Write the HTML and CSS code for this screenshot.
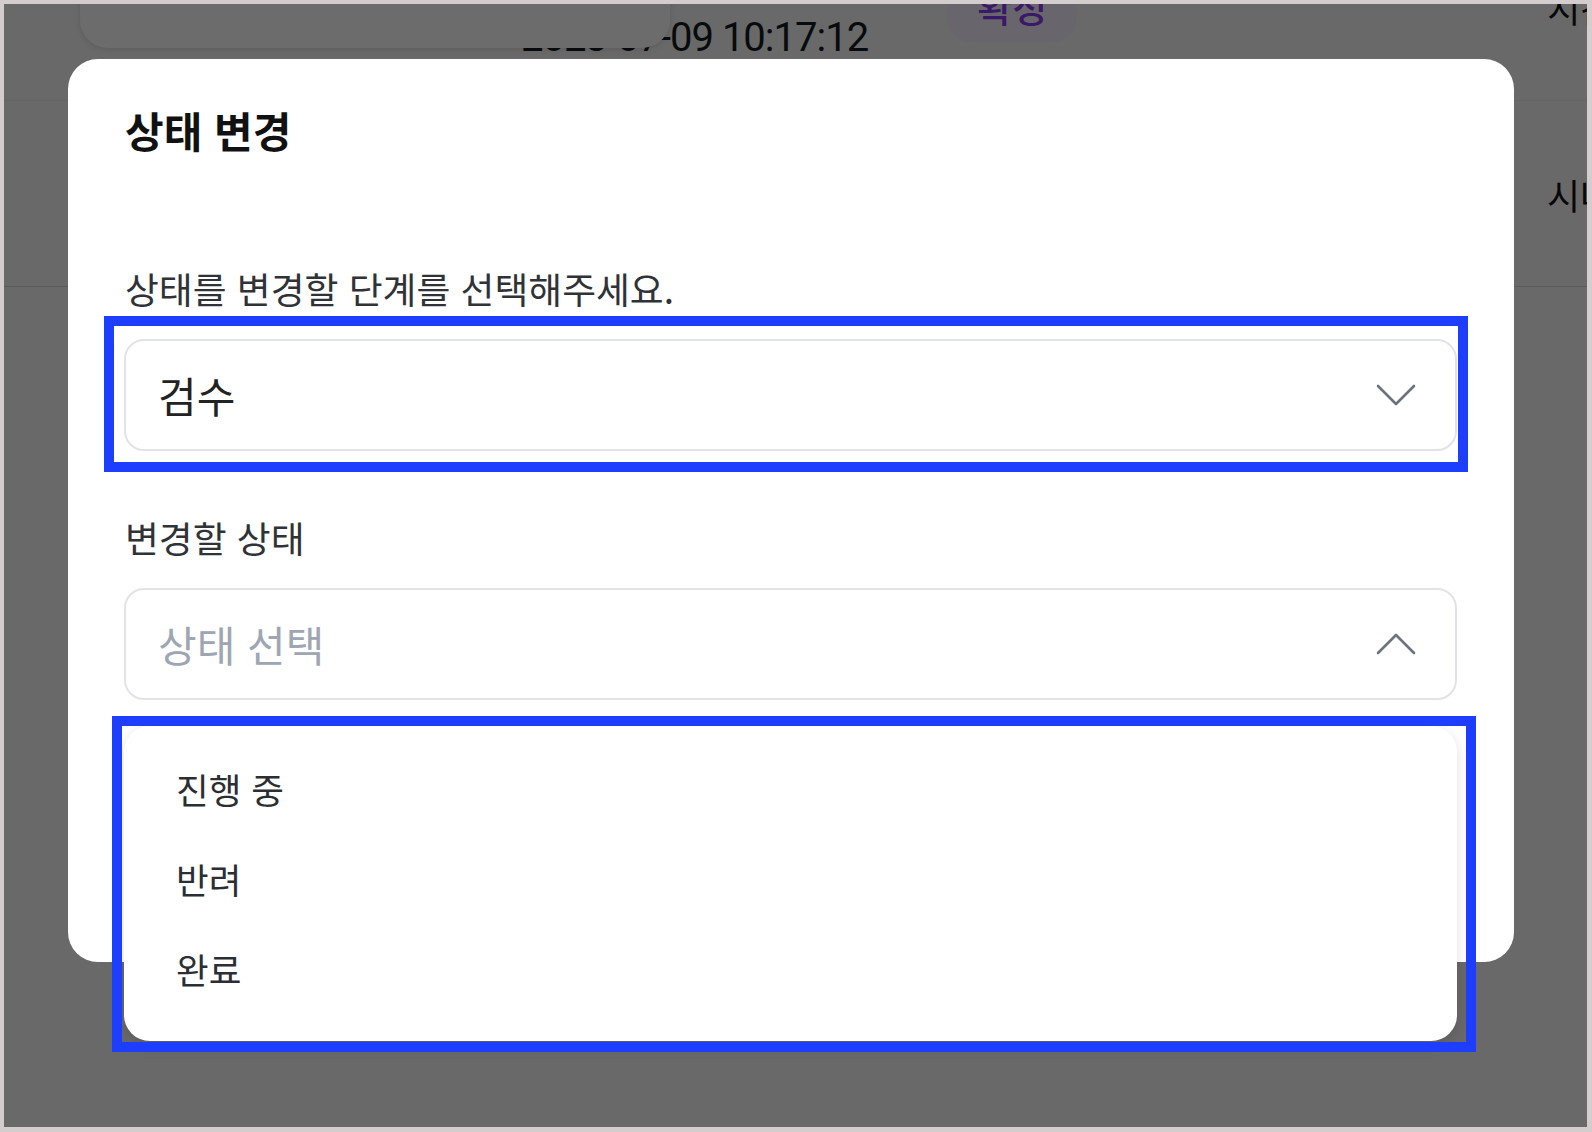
FILE: index.html
```html
<!DOCTYPE html>
<html lang="ko">
<head>
<meta charset="utf-8">
<title>상태 변경</title>
<link rel="stylesheet" href="styles.css">
</head>
<body>
<div class="frame">
  <div class="page">
    <div class="row row-head">
      <div class="top-card"></div>
      <span class="date">2023-07-09 10:17:12</span>
      <span class="pill">확정</span>
      <span class="cell-r cell-head">시간</span>
    </div>
    <div class="row row-body">
      <span class="cell-r">시나리오</span>
    </div>
    <div class="row row-rest"></div>
  </div>
  <div class="overlay">
    <div class="modal">
      <h2 class="modal-title">상태 변경</h2>
      <div class="field field-first">
        <div class="field-label">상태를 변경할 단계를 선택해주세요.</div>
        <div class="select-wrap">
          <div class="select">
            <span class="select-value">검수</span>
            <svg class="chev" width="40" height="22" viewBox="0 0 40 22"><path d="M2 2 L20 20 L38 2" fill="none" stroke="#6b7280" stroke-width="2.6" stroke-linecap="round" stroke-linejoin="round"/></svg>
          </div>
          <div class="highlight hl-stage"></div>
        </div>
      </div>
      <div class="field field-second">
        <div class="field-label">변경할 상태</div>
        <div class="select-wrap">
          <div class="select">
            <span class="select-placeholder">상태 선택</span>
            <svg class="chev" width="40" height="22" viewBox="0 0 40 22"><path d="M2 20 L20 2 L38 20" fill="none" stroke="#6b7280" stroke-width="2.6" stroke-linecap="round" stroke-linejoin="round"/></svg>
          </div>
          <ul class="menu">
            <li class="menu-item">진행 중</li>
            <li class="menu-item">반려</li>
            <li class="menu-item">완료</li>
          </ul>
          <div class="highlight hl-menu"></div>
        </div>
      </div>
    </div>
  </div>
</div>
</body>
</html>
```

FILE: styles.css
```css
* { box-sizing: border-box; }

html, body {
  margin: 0;
  padding: 0;
  background: #d4cdcd;
}

body {
  font-family: "Noto Sans CJK KR", "Noto Sans", sans-serif;
}

.frame {
  position: relative;
  width: 1592px;
  height: 1132px;
  border-style: solid;
  border-color: #d4cdcd;
  border-width: 4px 5px 5px 4px;
  overflow: hidden;
  background: #f7f7f7;
}

/* background page (dimmed by overlay) */
.page {
  position: relative;
  width: 100%;
  height: 100%;
  background: #f7f7f7;
}

.row {
  position: relative;
  display: flex;
  border-bottom: 1px solid #e4e4e4;
}

.row > * { flex: none; }

.row-head {
  height: 97px;
  align-items: flex-start;
  border-bottom-color: #eeeeee;
}

.row-body {
  height: 186px;
  align-items: center;
  border-bottom-color: #d8d8d8;
}

.row-rest {
  height: 600px;
  border-bottom: none;
}

.top-card {
  position: absolute;
  left: 76px;
  top: -30px;
  width: 590px;
  height: 74px;
  background: #ffffff;
  border-radius: 22px 22px 28px 28px;
  box-shadow: 0 2px 6px rgba(0, 0, 0, 0.10);
  z-index: 2;
}

.date {
  margin-left: 517px;
  margin-top: 14px;
  font-family: Roboto, "Liberation Sans", sans-serif;
  font-size: 40px;
  line-height: 40px;
  letter-spacing: -1px;
  color: #141a22;
  white-space: nowrap;
}

.pill {
  margin-left: 79px;
  margin-top: -18px;
  width: 130px;
  height: 56px;
  padding-bottom: 16px;
  border-radius: 24px;
  background: #f6f1ff;
  color: #8a3ff0;
  font-size: 38px;
  line-height: 40px;
  font-weight: 500;
  text-align: center;
  white-space: nowrap;
}

.cell-r {
  margin-left: 470px;
  font-size: 36px;
  line-height: 40px;
  color: #141414;
  white-space: nowrap;
}

.cell-head {
  margin-top: -17px;
}

.row-body .cell-r {
  margin-left: 1543px;
}

/* overlay and modal */
.overlay {
  position: absolute;
  inset: 0;
  background: rgba(0, 0, 0, 0.575);
  padding: 55px 73px 0 64px;
  z-index: 5;
}

.modal {
  position: relative;
  height: 903px;
  background: #ffffff;
  border-radius: 30px;
  padding: 43px 57px 0 56px;
}

.modal-title {
  margin: 0 0 0 1px;
  font-size: 42px;
  line-height: 56px;
  font-weight: 700;
  color: #111111;
}

.field-label {
  font-size: 36.8px;
  line-height: 48px;
  color: #2f3237;
  margin-bottom: 27px;
  padding-left: 1px;
}

.field-first { margin-top: 106px; }
.field-second { margin-top: 62px; }

.select-wrap {
  position: relative;
}

.select {
  display: flex;
  align-items: center;
  justify-content: space-between;
  height: 112px;
  border: 2px solid #e1e3e8;
  border-radius: 20px;
  padding: 0 39px 0 32px;
  background: #ffffff;
}

.select-value {
  font-size: 42px;
  line-height: 56px;
  color: #222222;
}

.select-placeholder {
  font-size: 42px;
  line-height: 56px;
  color: #9ea6b3;
}

.chev {
  display: block;
  flex: none;
}

.menu {
  position: absolute;
  left: 0;
  right: 0;
  top: calc(100% + 26px);
  height: 315px;
  margin: 0;
  padding: 18px 0 0 52px;
  list-style: none;
  background: #ffffff;
  border-radius: 26px;
  box-shadow: 0 4px 14px rgba(0, 0, 0, 0.13);
  z-index: 3;
}

.menu-item {
  font-size: 35.5px;
  line-height: 90px;
  height: 90px;
  color: #2b2e33;
}

/* annotation highlight boxes */
.highlight {
  position: absolute;
  border: 10px solid #1d3eff;
  z-index: 4;
  pointer-events: none;
}

.hl-stage {
  left: -20px;
  top: -23px;
  width: 1364px;
  height: 156px;
}

.hl-menu {
  left: -12px;
  top: 128px;
  width: 1364px;
  height: 336px;
}
```
